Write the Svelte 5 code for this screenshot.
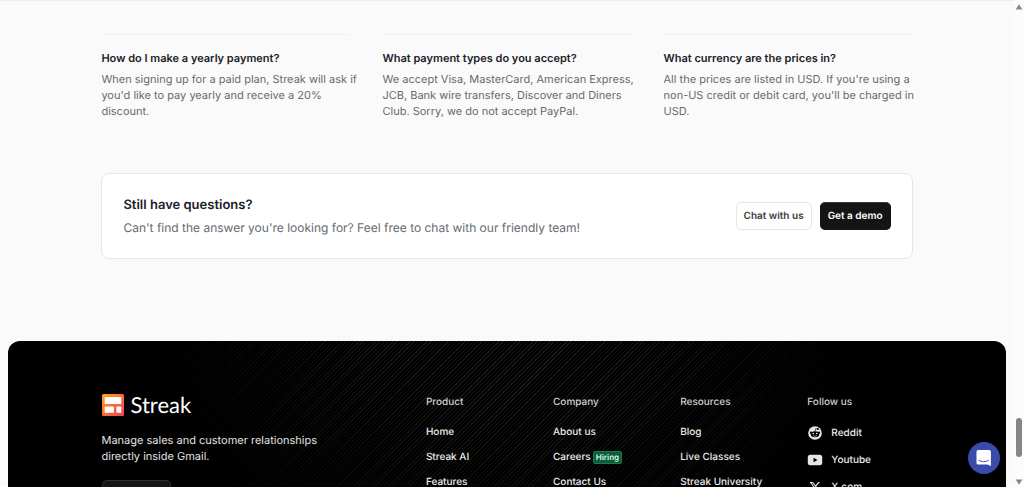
<script lang="ts">
	const faqs = [
		{
			question: 'How do I make a yearly payment?',
			answer:
				"When signing up for a paid plan, Streak will ask if you'd like to pay yearly and receive a 20% discount."
		},
		{
			question: 'What payment types do you accept?',
			answer:
				'We accept Visa, MasterCard, American Express, JCB, Bank wire transfers, Discover and Diners Club. Sorry, we do not accept PayPal.'
		},
		{
			question: 'What currency are the prices in?',
			answer:
				"All the prices are listed in USD. If you're using a non-US credit or debit card, you'll be charged in USD."
		}
	];

	const columns = [
		{ title: 'Product', links: [{ label: 'Home' }, { label: 'Streak AI' }, { label: 'Features' }] },
		{
			title: 'Company',
			links: [{ label: 'About us' }, { label: 'Careers', badge: 'Hiring' }, { label: 'Contact Us' }]
		},
		{
			title: 'Resources',
			links: [{ label: 'Blog' }, { label: 'Live Classes' }, { label: 'Streak University' }]
		}
	];

	const socials = ['Reddit', 'Youtube', 'X.com'];
</script>

<div class="window">
	<main>
		<section class="container faq">
			{#each faqs as faq}
				<article>
					<h3>{faq.question}</h3>
					<p>{faq.answer}</p>
				</article>
			{/each}
		</section>

		<section class="container contact">
			<div>
				<h2>Still have questions?</h2>
				<p>Can't find the answer you're looking for? Feel free to chat with our friendly team!</p>
			</div>
			<div class="actions">
				<button type="button" class="btn">Chat with us</button>
				<button type="button" class="btn btn-dark">Get a demo</button>
			</div>
		</section>
	</main>

	<footer>
		<div class="container footer-grid">
			<div class="brand">
				<a class="logo" href="#home">
					<svg width="22" height="22" viewBox="0 0 22 22" aria-hidden="true">
						<defs>
							<linearGradient id="logo-fill" x1="0" y1="0" x2="1" y2="1">
								<stop offset="0" stop-color="#ffa51f" />
								<stop offset="0.5" stop-color="#fb6c35" />
								<stop offset="1" stop-color="#f0455a" />
							</linearGradient>
						</defs>
						<rect width="22" height="22" rx="1.5" fill="url(#logo-fill)" />
						<rect x="2.7" y="3" width="16.6" height="7" rx="0.6" fill="#fff" />
						<rect x="2.7" y="12.6" width="9.2" height="6.2" rx="0.6" fill="#fff" />
						<rect x="14.4" y="12.6" width="4.9" height="6.2" rx="0.6" fill="#fff" />
					</svg>
					<span>Streak</span>
				</a>
				<p>Manage sales and customer relationships directly inside Gmail.</p>
				<button type="button" class="store" aria-label="Get the app"></button>
			</div>

			<nav>
				{#each columns as column}
					<div class="column">
						<h4>{column.title}</h4>
						<ul>
							{#each column.links as link}
								<li>
									<a href="#{link.label}">{link.label}</a>
									{#if link.badge}<span class="badge">{link.badge}</span>{/if}
								</li>
							{/each}
						</ul>
					</div>
				{/each}
				<div class="column">
					<h4>Follow us</h4>
					<ul class="socials">
						{#each socials as social}
							<li>
								<a href="#{social}">
									<svg width="16" height="16" viewBox="0 0 16 16" aria-hidden="true">
										{#if social === 'Reddit'}
											<circle cx="8" cy="8" r="6.8" fill="#e6e6e6" />
											<g fill="#000">
												<ellipse cx="8" cy="9.2" rx="4.2" ry="3" />
												<circle cx="3.9" cy="7.7" r="1.1" />
												<circle cx="12.1" cy="7.7" r="1.1" />
												<circle cx="10.9" cy="3.9" r="1" />
											</g>
											<path d="M8 6.5l.7-2.9 2.2.4" fill="none" stroke="#000" stroke-width="0.6" />
											<circle cx="6.3" cy="8.6" r="0.8" fill="#e6e6e6" />
											<circle cx="9.7" cy="8.6" r="0.8" fill="#e6e6e6" />
											<path
												d="M6.2 10.6c1 .8 2.6.8 3.6 0"
												fill="none"
												stroke="#e6e6e6"
												stroke-width="0.6"
											/>
										{:else if social === 'Youtube'}
											<rect x="0.8" y="2.7" width="14.4" height="10.6" rx="2.5" fill="#e6e6e6" />
											<path d="M6.5 5.7v4.6l4-2.3z" fill="#000" />
										{:else}
											<path
												d="M12.6.75h2.454l-5.36 6.142L16 15.25h-4.937l-3.867-5.07-4.425 5.07H.316l5.733-6.57L0 .75h5.063l3.495 4.633L12.601.75Zm-.86 13.028h1.36L4.323 2.145H2.865z"
												transform="translate(2.5 2.5) scale(0.7)"
												fill="#e6e6e6"
											/>
										{/if}
									</svg>
									{social}
								</a>
							</li>
						{/each}
					</ul>
				</div>
			</nav>
		</div>
	</footer>
</div>

<button type="button" class="messenger" aria-label="Open chat">
	<svg width="16" height="18" viewBox="0 0 16 18" aria-hidden="true">
		<path
			d="M2.2 1h11a1.7 1.7 0 0 1 1.7 1.7V17l-3.4-1.4H2.2A1.7 1.7 0 0 1 .5 13.9V2.7A1.7 1.7 0 0 1 2.2 1z"
			fill="#fff"
		/>
		<path
			d="M3 11.3c2.8 2 6.6 2 9.4 0"
			fill="none"
			stroke="#394cab"
			stroke-width="1"
			stroke-linecap="round"
		/>
	</svg>
</button>

<div class="scrollbar" aria-hidden="true">
	<svg width="8" height="6" viewBox="0 0 8 6"><path d="M4 .3L7.3 5.5H.7z" fill="#858585" /></svg>
	<div class="thumb"></div>
	<svg width="8" height="6" viewBox="0 0 8 6"><path d="M4 5.7L.7.5h6.6z" fill="#858585" /></svg>
</div>

<style>
	:global(body) {
		background: #fafafa;
		overflow: hidden;
		font-family: Inter, 'Liberation Sans', sans-serif;
		text-rendering: geometricPrecision;
	}

	.window {
		height: 100vh;
		overflow: hidden;
		box-sizing: border-box;
		margin-right: 10px;
	}

	main {
		border-top: 1px solid #eeeee6;
		padding: 33px 0 82px;
	}

	.container {
		width: 80%;
		margin: 0 auto;
		box-sizing: border-box;
	}

	h2,
	h3,
	h4,
	p,
	ul {
		margin: 0;
		padding: 0;
	}

	ul {
		list-style: none;
	}

	a {
		color: inherit;
		text-decoration: none;
	}

	button {
		font-family: inherit;
		text-rendering: inherit;
		cursor: pointer;
	}

	.faq {
		display: grid;
		grid-template-columns: repeat(3, 1fr);
		gap: 32px;
	}

	.faq article {
		border-top: 1px solid #f1f1f1;
		padding-top: 15px;
	}

	.faq h3 {
		color: #1b2128;
		font-size: 11px;
		font-weight: 600;
		line-height: 16px;
	}

	.faq p {
		margin: 5px -8px 0 0;
		color: #666b70;
		font-size: 11px;
		line-height: 16px;
	}

	.contact {
		display: flex;
		align-items: center;
		justify-content: space-between;
		margin-top: 54px;
		padding: 19px 21px;
		background: #fff;
		border: 1px solid #e6e6e6;
		border-radius: 8px;
	}

	.contact h2 {
		color: #1b2128;
		font-size: 13px;
		font-weight: 600;
		line-height: 24px;
	}

	.contact p {
		color: #666b70;
		font-size: 12px;
		line-height: 22px;
	}

	.actions {
		display: flex;
		gap: 8px;
	}

	.btn {
		padding: 0 7px;
		height: 28px;
		background: #fff;
		border: 1px solid #e6e6e6;
		border-radius: 5px;
		color: #3c3c3c;
		font-size: 10px;
		font-weight: 600;
	}

	.btn-dark {
		background: #141414;
		border-color: #141414;
		border-top-color: #3a3a3a;
		color: #fff;
	}

	footer {
		position: relative;
		height: 400px;
		margin: 0 8px;
		padding-top: 52px;
		box-sizing: border-box;
		background: #000;
		border-radius: 12px;
		color: #e2e2e2;
	}

	/* diagonal stripes fading out from the top centre */
	footer::before {
		content: '';
		position: absolute;
		inset: 0;
		background: repeating-linear-gradient(135deg, transparent 0 2px, #181818 2px 3px);
		mask-image: radial-gradient(ellipse 360px 260px at 50% 0, #000 20%, transparent 100%);
	}

	.footer-grid {
		position: relative;
		display: grid;
		grid-template-columns: 2fr 3fr;
		width: 811px;
		max-width: 100%;
	}

	.logo {
		display: flex;
		align-items: center;
		gap: 7px;
		height: 24px;
		color: #fff;
		font-family: Lato, sans-serif;
		font-size: 22px;
		line-height: 24px;
	}

	.brand p {
		max-width: 240px;
		margin-top: 15px;
		font-size: 11px;
		line-height: 16px;
	}

	.store {
		display: block;
		width: 69px;
		height: 28px;
		margin-top: 16px;
		background: #141414;
		border: 1px solid #303030;
		border-radius: 5px;
	}

	nav {
		display: grid;
		grid-template-columns: repeat(4, 1fr);
		column-gap: 22px;
		padding-top: 1px;
	}

	h4 {
		color: #cfcfcf;
		font-size: 10px;
		font-weight: 500;
		line-height: 16px;
	}

	.column ul {
		display: flex;
		flex-direction: column;
		gap: 9px;
		margin-top: 14px;
		font-size: 10px;
		font-weight: 500;
		line-height: 16px;
	}

	.column li {
		display: flex;
		align-items: center;
		gap: 2px;
		height: 16px;
		color: #ececec;
		white-space: nowrap;
	}

	.badge {
		padding: 0 2px;
		background: #0d5c3a;
		border: 1px solid #157a4f;
		border-radius: 2px;
		color: #d5f5e3;
		font-size: 8px;
		font-weight: 600;
		line-height: 11px;
	}

	.column .socials {
		gap: 11px;
		margin-top: 15px;
	}

	.socials a {
		display: flex;
		align-items: center;
		gap: 8px;
	}

	.messenger {
		position: fixed;
		right: 24px;
		bottom: 13px;
		display: grid;
		place-items: center;
		width: 32px;
		height: 32px;
		padding: 0;
		background: #394cab;
		border: none;
		border-radius: 50%;
	}

	.scrollbar {
		position: fixed;
		top: 0;
		right: 0;
		bottom: 0;
		display: flex;
		flex-direction: column;
		align-items: center;
		box-sizing: border-box;
		width: 10px;
		padding: 4px 0 2px;
		background: #fcfcfc;
	}

	.thumb {
		width: 6px;
		height: 39px;
		margin: auto 0 22px;
		background: #858585;
		border-radius: 3px;
	}
</style>
